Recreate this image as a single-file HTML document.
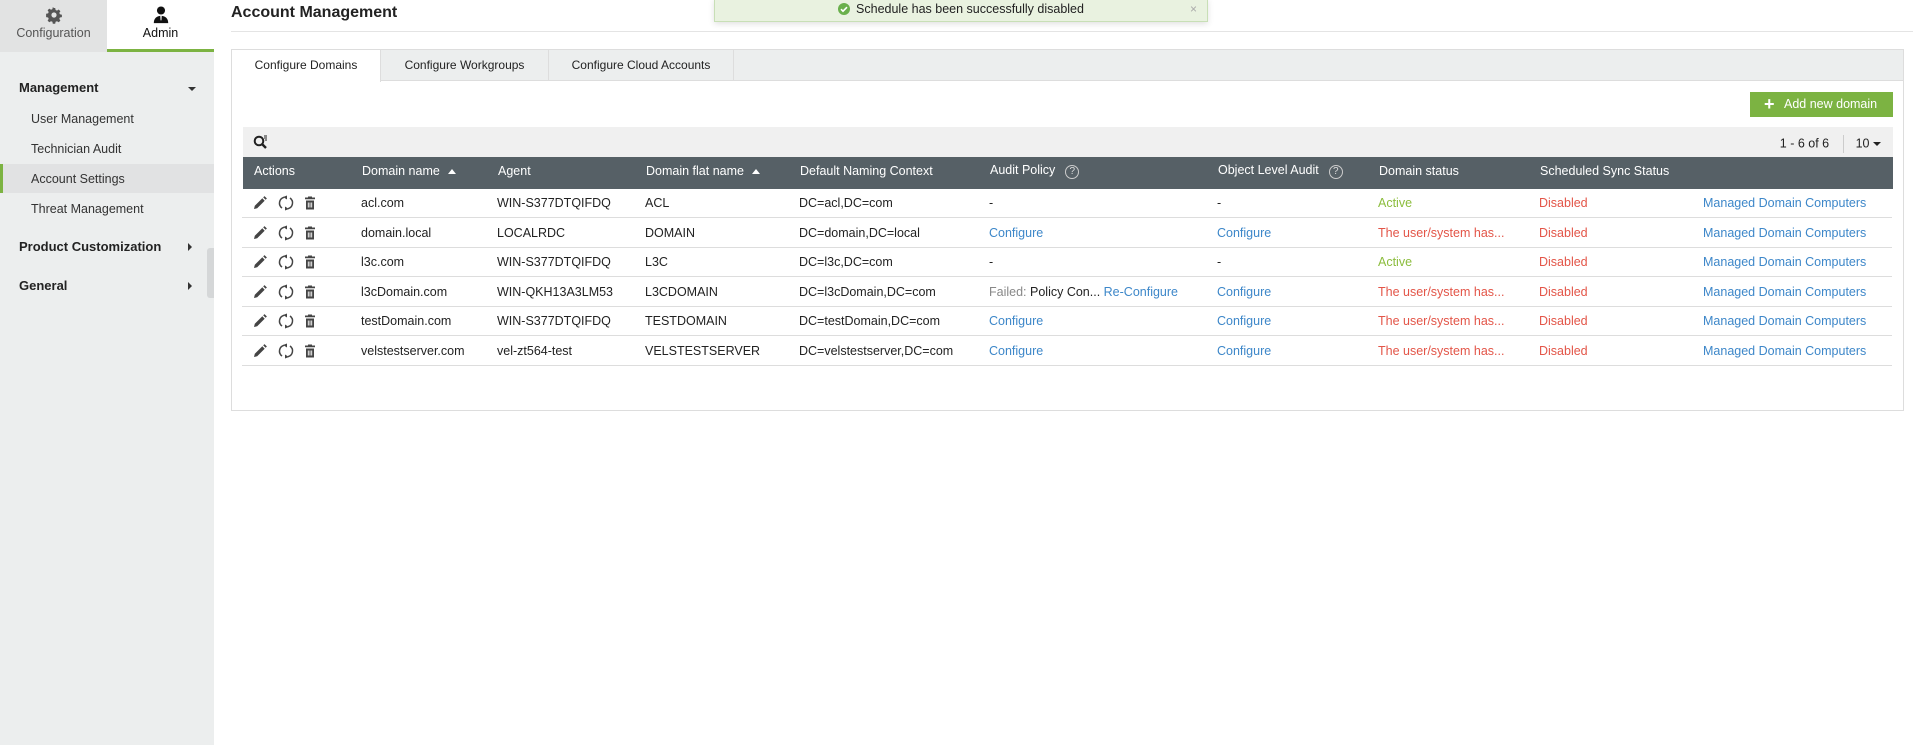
<!DOCTYPE html>
<html><head><meta charset="utf-8">
<style>
*{box-sizing:border-box;margin:0;padding:0}
body{width:1918px;height:745px;overflow:hidden;background:#fff;font-family:"Liberation Sans",Arial,sans-serif;font-size:12.5px;color:#222;position:relative}
.side{position:absolute;left:0;top:0;width:214px;height:745px;background:#eceeee}
.toptab{position:absolute;top:0;height:52px;width:107px;text-align:center;font-size:12.5px}
.t1{left:0;background:#e2e3e3;color:#555}
.t2{left:107px;background:#fff;color:#111;border-bottom:3px solid #7cb342}
.toptab .ic{display:block;margin:6px auto 2px;height:18px}
.sec{position:absolute;left:19px;font-weight:bold;font-size:13px;color:#222}
.car{position:absolute;left:188px;width:0;height:0}
.down{border-left:4px solid transparent;border-right:4px solid transparent;border-top:4px solid #333}
.right{border-top:4px solid transparent;border-bottom:4px solid transparent;border-left:4px solid #333}
.item{position:absolute;left:31px;font-size:12.5px;color:#333}
.sel{position:absolute;left:0;top:164px;width:214px;height:29px;background:#e1e2e3;border-left:3px solid #7cb342}
.handle{position:absolute;left:207px;top:248px;width:7px;height:50px;background:#d5d7d8;border-radius:3px 0 0 3px}
.title{position:absolute;left:231px;top:4px;font-size:16px;font-weight:bold;color:#222}
.hl{position:absolute;left:231px;top:31px;width:1682px;height:1px;background:#e4e4e4}
.toast{position:absolute;left:714px;top:-2px;width:494px;height:24px;background:#e9f2e0;border:1px solid #c8dfb6;box-shadow:0 2px 6px rgba(0,0,0,.12);text-align:center;font-size:12.5px;line-height:20px;color:#222}
.toast .x{position:absolute;right:10px;top:0;color:#aaa;font-size:12px}
.panel{position:absolute;left:231px;top:49px;width:1673px;height:362px;border:1px solid #ddd}
.tabs{position:absolute;left:0;top:0;width:1671px;height:31px;background:#eceeee;border-bottom:1px solid #ddd}
.tab{position:absolute;top:0;height:31px;line-height:30px;text-align:center;font-size:12px;border-right:1px solid #ddd}
.tab.a{background:#fff;height:32px}
.btn{position:absolute;left:1518px;top:42px;width:143px;height:25px;background:#7cb342;color:#fff;font-size:12.5px;line-height:25px;padding-left:34px}
.btn b{position:absolute;left:14px;top:0;font-size:18px}
.tool{position:absolute;left:11px;top:77px;width:1650px;height:30px;background:#f0f0f0}
.pg{position:absolute;right:12px;top:8px;font-size:12.5px}
.thead{position:absolute;left:11px;top:107px;width:1650px;height:32px;background:#566066;color:#fff}
.th{position:absolute;top:7px;font-size:12.5px}
.row{position:absolute;left:0;width:1650px;height:30px;border-bottom:1px solid #ddd}
.c{position:absolute;top:8px;white-space:nowrap}
.bl{color:#3d87c9}.rd{color:#e35548}.gr{color:#8cbd3e}.gy{color:#888}
.q{display:inline-block;width:14px;height:14px;border:1.5px solid #ccc;border-radius:50%;font-size:10px;line-height:11px;text-align:center;margin-left:10px;color:#ddd}
.sa{display:inline-block;margin-left:8px;border-left:4px solid transparent;border-right:4px solid transparent;border-bottom:5px solid #fff;vertical-align:middle}
</style></head><body>
<div class="side">
 <div class="toptab t1"><svg class="ic" width="18" height="18" viewBox="0 0 18 18"><path fill="#555" d="M9 2l1.2 0 .4 2 1.4.6 1.7-1.1 1.7 1.7-1.1 1.7.6 1.4 2 .4v2.4l-2 .4-.6 1.4 1.1 1.7-1.7 1.7-1.7-1.1-1.4.6-.4 2H7.8l-.4-2-1.4-.6-1.7 1.1-1.7-1.7 1.1-1.7-.6-1.4-2-.4V7.8l2-.4.6-1.4-1.1-1.7 1.7-1.7 1.7 1.1 1.4-.6.4-2z"/><circle cx="9" cy="9" r="2.6" fill="#e2e3e3"/></svg>Configuration</div>
 <div class="toptab t2"><svg class="ic" width="18" height="20" viewBox="0 0 18 20"><circle cx="9" cy="5" r="4.5" fill="#111"/><path fill="#111" d="M1 19c0-5 3-8 8-8s8 3 8 8z"/><path fill="#fff" d="M8.2 11h1.6l-.3 5h-1z"/></svg>Admin</div>
 <div class="sec" style="top:80px">Management</div><div class="car down" style="top:87px"></div>
 <div class="item" style="top:112px">User Management</div>
 <div class="item" style="top:142px">Technician Audit</div>
 <div class="sel"></div>
 <div class="item" style="top:172px">Account Settings</div>
 <div class="item" style="top:202px">Threat Management</div>
 <div class="sec" style="top:239px">Product Customization</div><div class="car right" style="top:243px"></div>
 <div class="sec" style="top:278px">General</div><div class="car right" style="top:282px"></div>
 <div class="handle"></div>
</div>
<div class="title">Account Management</div>
<div class="hl"></div>
<div class="toast"><svg width="12" height="12" viewBox="0 0 12 12" style="vertical-align:-2px;margin-right:6px"><circle cx="6" cy="6" r="6" fill="#6ab04c"/><path d="M3 6.2l2 2 4-4" stroke="#fff" stroke-width="1.6" fill="none"/></svg>Schedule has been successfully disabled<span class="x">×</span></div>
<div class="panel">
 <div class="tabs">
  <div class="tab a" style="left:0;width:149px">Configure Domains</div>
  <div class="tab" style="left:149px;width:168px">Configure Workgroups</div>
  <div class="tab" style="left:317px;width:185px">Configure Cloud Accounts</div>
 </div>
 <div class="btn"><b>+</b>Add new domain</div>
 <div class="tool"><svg style="position:absolute;left:10px;top:7px" width="16" height="16" viewBox="0 0 16 16"><circle cx="6" cy="7" r="4.3" stroke="#222" stroke-width="2" fill="none"/><path d="M9 10l4 4" stroke="#222" stroke-width="2.4"/><path d="M11 2h3M11 4h3M12 6h2" stroke="#222" stroke-width="1"/></svg>
  <div class="pg">1 - 6 of 6 <span style="display:inline-block;width:1px;height:18px;background:#ccc;vertical-align:middle;margin:0 12px 0 10px"></span>10 <span style="display:inline-block;border-left:4px solid transparent;border-right:4px solid transparent;border-top:4px solid #222;vertical-align:middle"></span></div></div>
 <div class="thead">
  <div class="th" style="left:11px">Actions</div>
  <div class="th" style="left:119px">Domain name<span class="sa"></span></div>
  <div class="th" style="left:255px">Agent</div>
  <div class="th" style="left:403px">Domain flat name<span class="sa"></span></div>
  <div class="th" style="left:557px">Default Naming Context</div>
  <div class="th" style="left:747px;top:6px">Audit Policy<span class="q">?</span></div>
  <div class="th" style="left:975px;top:6px">Object Level Audit<span class="q">?</span></div>
  <div class="th" style="left:1136px">Domain status</div>
  <div class="th" style="left:1297px">Scheduled Sync Status</div>
 </div>
</div>
<div id="rows" style="position:absolute;left:242px;top:188px;width:1650px"></div>
<script>
var d=[["acl.com","WIN-S377DTQIFDQ","ACL","DC=acl,DC=com",'-','-',1],
["domain.local","LOCALRDC","DOMAIN","DC=domain,DC=local",'<span class="bl">Configure</span>','<span class="bl">Configure</span>',0],
["l3c.com","WIN-S377DTQIFDQ","L3C","DC=l3c,DC=com",'-','-',1],
["l3cDomain.com","WIN-QKH13A3LM53","L3CDOMAIN","DC=l3cDomain,DC=com",'<span class="gy">Failed:</span> Policy Con... <span class="bl">Re-Configure</span>','<span class="bl">Configure</span>',0],
["testDomain.com","WIN-S377DTQIFDQ","TESTDOMAIN","DC=testDomain,DC=com",'<span class="bl">Configure</span>','<span class="bl">Configure</span>',0],
["velstestserver.com","vel-zt564-test","VELSTESTSERVER","DC=velstestserver,DC=com",'<span class="bl">Configure</span>','<span class="bl">Configure</span>',0]];
var ic='<svg width="66" height="16" viewBox="0 0 66 16"><path d="M1 14l.8-3.2 7.5-7.5 2.4 2.4-7.5 7.5z M10.2 2.4l1.3-1.3 2.4 2.4-1.3 1.3z" fill="#444"/>'+
'<g transform="translate(26,0)" fill="none" stroke="#444" stroke-width="1.5"><path d="M5 2.3A6 6 0 0 0 3 13"/><path d="M9 13.7A6 6 0 0 0 11 3"/></g><path d="M30 2l4-1.5v4z M36 14l-4 1.5v-4z" fill="#444"/>'+
'<path d="M55 1.5h4v1h3v1.8h-10V2.5h3z M53 5.5h8v9h-8z" fill="#444"/><path d="M55.3 7.5v5M57 7.5v5M58.7 7.5v5" stroke="#fff" stroke-width=".9"/></svg>';
var h='';
d.forEach(function(r,i){h+='<div class="row" style="top:'+(i*29.6)+'px"><div class="c" style="left:11px;top:7px">'+ic+'</div><div class="c" style="left:119px">'+r[0]+'</div><div class="c" style="left:255px">'+r[1]+'</div><div class="c" style="left:403px">'+r[2]+'</div><div class="c" style="left:557px">'+r[3]+'</div><div class="c" style="left:747px">'+r[4]+'</div><div class="c" style="left:975px">'+r[5]+'</div>'+(r[6]?'<div class="c gr" style="left:1136px">Active</div>':'<div class="c rd" style="left:1136px">The user/system has...</div>')+'<div class="c rd" style="left:1297px">Disabled</div><div class="c bl" style="left:1461px">Managed Domain Computers</div></div>';});
document.getElementById('rows').innerHTML=h;
</script>
</body></html>
